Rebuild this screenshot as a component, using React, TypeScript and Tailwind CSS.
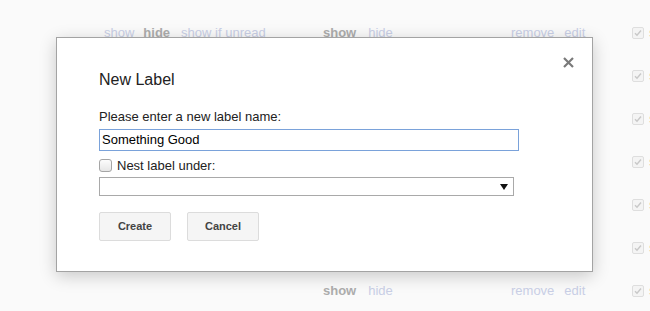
import React from "react";

const rows = [
  { system: true },
  { system: false },
  { system: false },
  { system: false },
  { system: false },
  { system: false },
  { system: false },
];

function FadedCheck() {
  return (
    <span className="flex h-[12px] w-[12px] shrink-0 items-center justify-center rounded-[2px] border border-[#dedede] bg-[#f4f4f4]">
      <svg width="8" height="8" viewBox="0 0 8 8">
        <path d="M1 4.2 L3 6.2 L7 1.5" fill="none" stroke="#c8c8c8" strokeWidth="1.4" />
      </svg>
    </span>
  );
}

function BackgroundRow({ system }: { system: boolean }) {
  return (
    <div className="flex h-[43px] items-center text-[13px] whitespace-nowrap">
      <div className="box-content flex w-[219px] shrink-0 pl-[104px]">
        {system && (
          <>
            <span className="text-[#c9cfe6]">show</span>
            <span className="ml-[9px] font-bold text-[#adadad]">hide</span>
            <span className="ml-[11px] text-[#c9cfe6]">show if unread</span>
          </>
        )}
      </div>
      <div className="flex w-[188px] shrink-0 gap-[12px]">
        <span className="font-bold text-[#adadad]">show</span>
        <span className="text-[#c9cfe6]">hide</span>
      </div>
      <div className="flex w-[121px] shrink-0 gap-[10px]">
        <span className="text-[#c9cfe6]">remove</span>
        <span className="text-[#c9cfe6]">edit</span>
      </div>
      <div className="flex shrink-0 items-center gap-[5px]">
        <FadedCheck />
        <span className="text-[#f1c9a6]">s</span>
      </div>
    </div>
  );
}

export default function App() {
  return (
    <div
      className="relative h-[311px] w-[650px] overflow-hidden bg-[#fafafa]"
      style={{ fontFamily: '"Liberation Sans", Arial, sans-serif' }}
    >
      {/* Faded settings list behind the dialog */}
      <div className="pt-[11px]">
        {rows.map((r, i) => (
          <BackgroundRow key={i} system={r.system} />
        ))}
      </div>

      {/* Dialog */}
      <div className="absolute left-[56px] top-[37px] h-[235px] w-[537px] border border-[#a3a3a3] bg-white shadow-[0_4px_16px_rgba(0,0,0,0.2)]">
        <button className="absolute right-[18px] top-[18px] flex h-[12px] w-[12px] items-center justify-center">
          <svg width="11" height="11" viewBox="0 0 11 11">
            <path d="M1 1 L10 10 M10 1 L1 10" stroke="#7a7a7a" strokeWidth="2.2" />
          </svg>
        </button>

        <div className="flex flex-col pl-[42px] pt-[32px] text-[13px] text-[#222]">
          <h2 className="text-[16px] leading-[19px] text-[#222]">New Label</h2>

          <label className="mt-[20px] leading-[15px]">Please enter a new label name:</label>
          <div className="mt-[5px] flex h-[22px] w-[420px] items-center border border-[#7aa2da] px-[2px] text-[13px] text-black">
            Something Good
          </div>

          <div className="mt-[7px] flex h-[15px] items-center gap-[5px]">
            <span className="h-[13px] w-[13px] rounded-[3px] border border-[#a5a5a5] bg-gradient-to-b from-[#fcfcfc] to-[#e6e6e6]" />
            <span>Nest label under:</span>
          </div>

          <div className="mt-[4px] flex h-[19px] w-[415px] items-center justify-end border border-[#a9a9a9] bg-white pr-[5px]">
            <svg width="8" height="6" viewBox="0 0 8 6">
              <path d="M0 0 H8 L4 6 Z" fill="#111" />
            </svg>
          </div>

          <div className="mt-[16px] flex gap-[16px]">
            <button className="h-[29px] w-[72px] rounded-[2px] border border-[#dcdcdc] bg-[#f5f5f5] text-[11px] font-bold text-[#444]">
              Create
            </button>
            <button className="h-[29px] w-[72px] rounded-[2px] border border-[#dcdcdc] bg-[#f5f5f5] text-[11px] font-bold text-[#444]">
              Cancel
            </button>
          </div>
        </div>
      </div>
    </div>
  );
}
